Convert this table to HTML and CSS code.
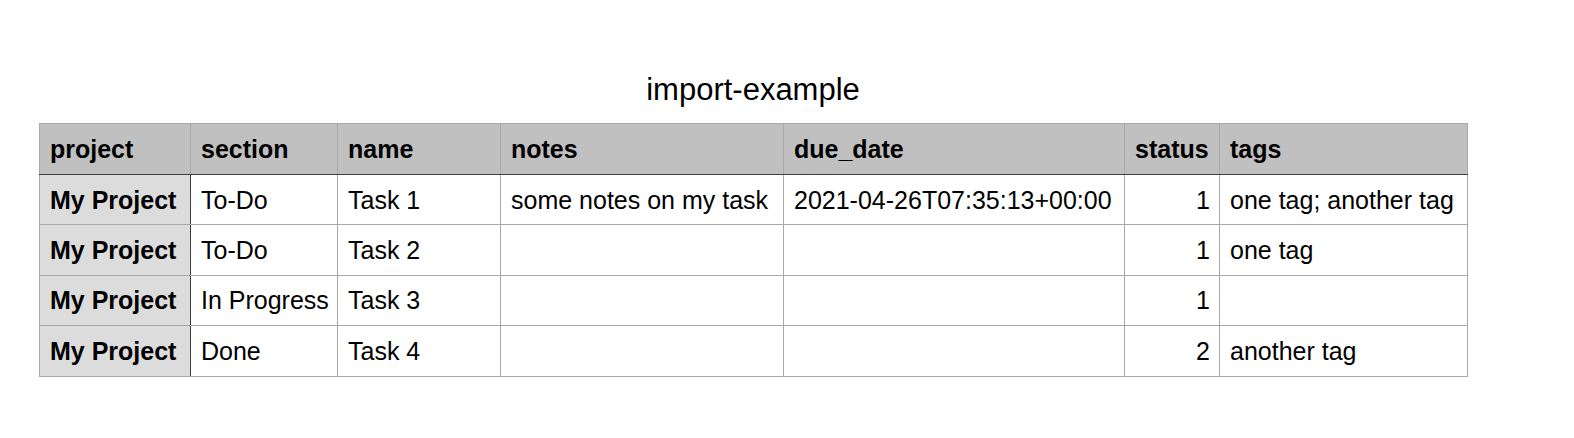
FILE: index.html
```html
<!DOCTYPE html>
<html lang="en">
<head>
<meta charset="utf-8">
<title>import-example</title>
<link rel="stylesheet" href="styles.css">
</head>
<body>
<div class="sheet">
  <h1 class="sheet-title">import-example</h1>
  <table class="grid">
    <colgroup>
      <col class="c-project">
      <col class="c-section">
      <col class="c-name">
      <col class="c-notes">
      <col class="c-due">
      <col class="c-status">
      <col class="c-tags">
    </colgroup>
    <thead>
      <tr>
        <th>project</th>
        <th>section</th>
        <th>name</th>
        <th>notes</th>
        <th>due_date</th>
        <th>status</th>
        <th>tags</th>
      </tr>
    </thead>
    <tbody>
      <tr>
        <th class="rowhead">My Project</th>
        <td>To-Do</td>
        <td>Task 1</td>
        <td>some notes on my task</td>
        <td>2021-04-26T07:35:13+00:00</td>
        <td class="num">1</td>
        <td>one tag; another tag</td>
      </tr>
      <tr>
        <th class="rowhead">My Project</th>
        <td>To-Do</td>
        <td>Task 2</td>
        <td></td>
        <td></td>
        <td class="num">1</td>
        <td>one tag</td>
      </tr>
      <tr>
        <th class="rowhead">My Project</th>
        <td>In Progress</td>
        <td>Task 3</td>
        <td></td>
        <td></td>
        <td class="num">1</td>
        <td></td>
      </tr>
      <tr>
        <th class="rowhead">My Project</th>
        <td>Done</td>
        <td>Task 4</td>
        <td></td>
        <td></td>
        <td class="num">2</td>
        <td>another tag</td>
      </tr>
    </tbody>
  </table>
</div>
</body>
</html>
```

FILE: styles.css
```css
html, body {
  margin: 0;
  padding: 0;
  background: #ffffff;
}

body {
  font-family: "Liberation Sans", Arial, Helvetica, sans-serif;
  color: #000000;
}

.sheet {
  width: 1428px;
  padding: 72px 0 0 39px;
}

.sheet-title {
  margin: 0 0 15px 0;
  font-size: 31px;
  line-height: 36px;
  font-weight: normal;
  text-align: center;
}

.grid {
  width: 1428px;
  table-layout: fixed;
  border-collapse: collapse;
  font-size: 25px;
}

.c-project { width: 151px; }
.c-section { width: 147px; }
.c-name    { width: 163px; }
.c-notes   { width: 283px; }
.c-due     { width: 341px; }
.c-status  { width: 95px; }
.c-tags    { width: 248px; }

.grid th,
.grid td {
  border: 1px solid #a8a8a8;
  padding: 0 9px 0 10px;
  white-space: nowrap;
  overflow: hidden;
  text-align: left;
  vertical-align: middle;
  line-height: 28px;
}

.grid thead th {
  height: 51px;
  box-sizing: border-box;
  background: #bfc0bf;
  font-weight: bold;
  border-bottom: 1px solid #3f3f3f;
}

.grid tbody td,
.grid tbody th {
  height: 50.4px;
  box-sizing: border-box;
}

.grid tbody .rowhead {
  background: #dcdcdc;
  font-weight: bold;
  border-right: 1px solid #3f3f3f;
}

.grid .num {
  text-align: right;
}
```
